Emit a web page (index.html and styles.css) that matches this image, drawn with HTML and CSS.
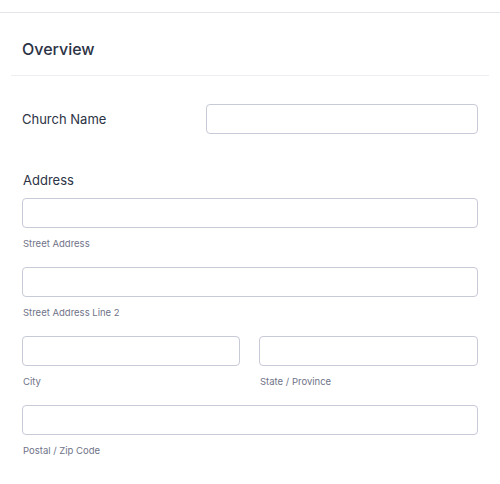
FILE: index.html
```html
<!DOCTYPE html>
<html>
<head>
<meta charset="utf-8">
<link rel="stylesheet" href="styles.css">
</head>
<body>
<div class="topbar"></div>
<div class="header"><h2 class="title">Overview</h2></div>
<div class="form">
  <div class="row">
    <label class="label">Church Name</label>
    <input class="input grow" type="text">
  </div>
  <div class="address">
    <div class="addr-label">Address</div>
    <div class="field">
      <input class="input" type="text">
      <div class="sub">Street Address</div>
    </div>
    <div class="field">
      <input class="input" type="text">
      <div class="sub">Street Address Line 2</div>
    </div>
    <div class="pair">
      <div class="field">
        <input class="input" type="text">
        <div class="sub">City</div>
      </div>
      <div class="field">
        <input class="input" type="text">
        <div class="sub">State / Province</div>
      </div>
    </div>
    <div class="field">
      <input class="input" type="text">
      <div class="sub">Postal / Zip Code</div>
    </div>
  </div>
</div>
</body>
</html>
```
FILE: styles.css
```css
* { box-sizing: border-box; }
html, body { margin: 0; padding: 0; background: #fff; }
body { font-family: Inter, "Noto Sans", sans-serif; color: #2c3345; }
.topbar { height: 13px; border-bottom: 1px solid #e3e5ea; }
.header { margin: 0 11px; padding: 26px 11px 16px; border-bottom: 1px solid #eceef2; }
.title { margin: 0; font-size: 16px; line-height: 20px; font-weight: 500; color: #2c3345; }
.form { padding: 28px 22px 0; }
.row { display: flex; align-items: center; }
.label { width: 184px; font-size: 13px; line-height: 16px; }
.input { display: block; width: 100%; height: 30px; border: 1px solid #c8cad7; border-radius: 4px; background: #fff; padding: 0 8px; font: inherit; outline: none; }
.grow { flex: 1; width: auto; }
.address { margin-top: 38px; }
.addr-label { font-size: 13px; line-height: 16px; margin: 0 0 10px 1px; }
.field { margin-bottom: 17px; }
.sub { margin: 10px 0 0 1px; font-size: 9.5px; line-height: 12px; color: #6f7388; }
.pair { display: grid; grid-template-columns: 218px 1fr; column-gap: 19px; }
```
